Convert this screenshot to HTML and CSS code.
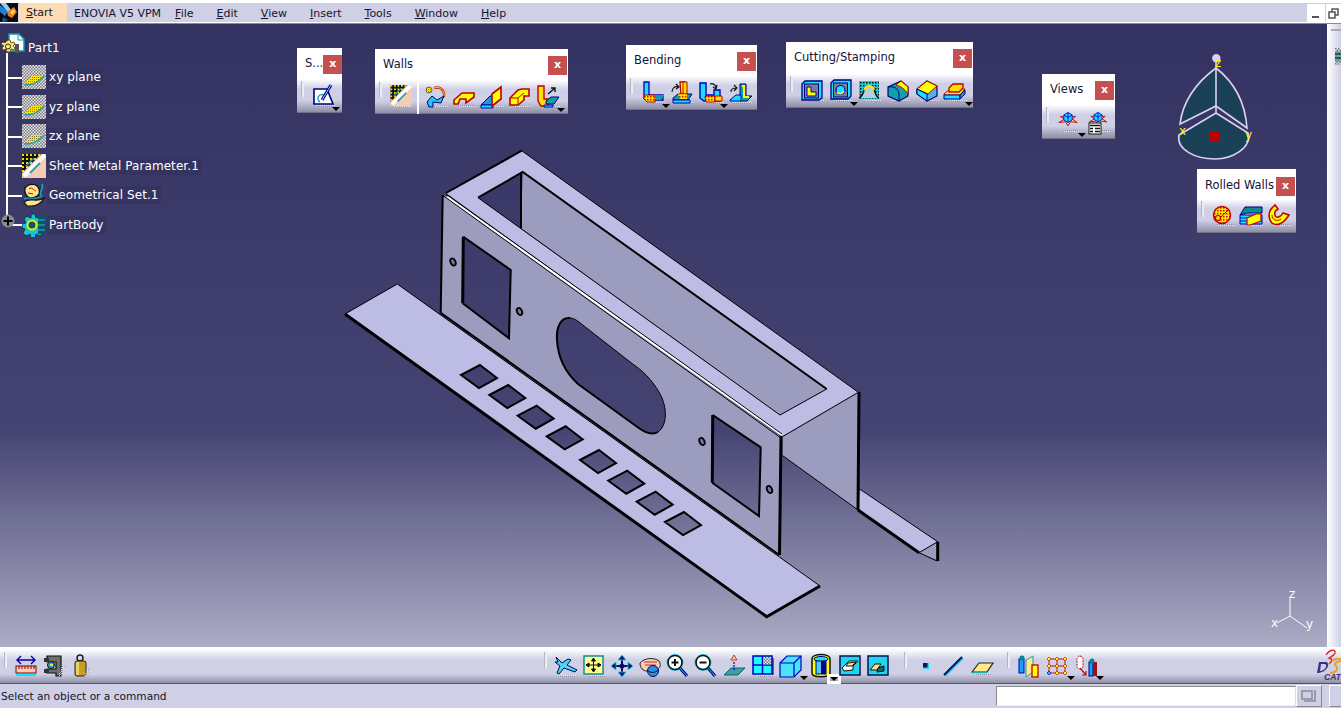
FILE: index.html
```html
<!DOCTYPE html>
<html lang="en">
<head>
<meta charset="utf-8">
<title>CATIA V5</title>
<link rel="stylesheet" href="styles.css">
</head>
<body>
<div class="app">
  <header class="menubar">
    <div class="start-logo"><svg viewBox="0 0 18 19" width="18" height="19"><rect width="18" height="19" fill="#0a0a14"/><path d="M0 2 L8 8 L5 13 L0 9Z" fill="#1f7fd0"/><path d="M0 0h6l5 7-3 2Z" fill="#8fd0f0"/><path d="M7 9 L14 4 L17 9 L12 15 L8 13Z" fill="#e8781c"/><path d="M10 9 L14 6 L15 9 L12 12Z" fill="#ffd060"/><path d="M3 14 L8 17 L5 19 H2Z" fill="#15508f"/></svg></div>
    <div class="menu-item start"><u>S</u>tart</div>
    <div class="menu-item enovia">ENOVIA V5 VPM</div>
    <div class="menu-item"><u>F</u>ile</div>
    <div class="menu-item"><u>E</u>dit</div>
    <div class="menu-item"><u>V</u>iew</div>
    <div class="menu-item"><u>I</u>nsert</div>
    <div class="menu-item"><u>T</u>ools</div>
    <div class="menu-item"><u>W</u>indow</div>
    <div class="menu-item"><u>H</u>elp</div>
    <div class="win-btn min"><svg viewBox="0 0 18 18" width="18" height="18"><rect x="5" y="12" width="7" height="2" fill="#555"/></svg></div>
    <div class="win-btn restore"><svg viewBox="0 0 14 18" width="14" height="18"><path d="M3 8h6v6H3Z M6 8V5h6v6H9" fill="none" stroke="#555" stroke-width="1.5"/></svg></div>
  </header>

  <div class="workspace">
    <main class="viewport">
      <svg class="scene" viewBox="0 24 1327 623" width="1327" height="623">
        <defs>
          <pattern id="chk" width="3" height="3" patternUnits="userSpaceOnUse"><rect width="3" height="3" fill="#e8e8ee"/><rect width="1.5" height="1.5" fill="#777"/><rect x="1.5" y="1.5" width="1.5" height="1.5" fill="#777"/></pattern>
          <pattern id="dith" width="2" height="2" patternUnits="userSpaceOnUse"><rect width="1" height="1" fill="#9a9aa8"/><rect x="1" y="1" width="1" height="1" fill="#e4e4ee"/></pattern>
          <pattern id="cdith" width="2" height="2" patternUnits="userSpaceOnUse"><rect width="2" height="2" fill="#33315c"/><rect width="1" height="1" fill="#1c4258"/><rect x="1" y="1" width="1" height="1" fill="#1c4258"/></pattern>
          <pattern id="yel" width="2" height="2" patternUnits="userSpaceOnUse"><rect width="2" height="2" fill="#ffe000"/><rect width="1" height="1" fill="#8a7a20"/></pattern>
          <pattern id="ykd" width="4" height="4" patternUnits="userSpaceOnUse"><rect width="4" height="4" fill="#111"/><rect width="2" height="2" fill="#e8e000"/></pattern>
          <pattern id="rhatch" width="3" height="3" patternUnits="userSpaceOnUse"><rect width="3" height="3" fill="#ffe000"/><path d="M0 0h1.5v1.5H0Z" fill="#d01010"/></pattern>
          <pattern id="chat" width="3" height="3" patternUnits="userSpaceOnUse"><rect width="3" height="3" fill="#20c8d8"/><rect width="1.5" height="1.5" fill="#111"/></pattern>
          <symbol id="plane" viewBox="0 0 24 24"><rect width="24" height="24" fill="url(#chk)"/><path d="M3 18 L10 11 H22 L17 17 L5 19Z" fill="url(#yel)"/><path d="M2 20 C8 20 14 20 22 11" fill="none" stroke="#1fa0b0" stroke-width="1.5"/></symbol>
          <symbol id="smp" viewBox="0 0 24 24"><rect width="24" height="24" fill="#f6cdb4"/><path d="M0 0H19L0 19Z" fill="url(#ykd)"/><path d="M23 1 L2 22" stroke="#fff" stroke-width="4"/><path d="M18 9 L8 19" stroke="#1aa3c8" stroke-width="2"/><path d="M12 4 L4 12" stroke="#1aa3c8" stroke-width="1.5"/></symbol>
          <symbol id="vw" viewBox="0 0 24 24"><path d="M1 15 L8 11 L3 8 L10 8 H14 L21 8 L17 11 L23 15 L15 14 L12 19 L9 14Z" fill="#ffe6a0" stroke="#c01010" stroke-width="1.2"/><path d="M7 6 L12 3 L17 6 V12 L12 15 L7 12Z" fill="#19d6ff" stroke="#0000c0"/><path d="M12 3V15 M7 6 L12 9 L17 6" stroke="#0000c0" fill="none"/></symbol>
        </defs>

        <!-- sheet metal part -->
        <path class="lt" fill-rule="evenodd" d="M345 314 L397.3 284 L820 586 L766.7 616.7Z M480 365l17 13-18 10-18-13Z M508.3 385l17 13-18 10-18-13Z M536.7 405.7l17 13-18 10-18-13Z M565.7 426.3l17 13-18 10-18-13Z M599 450l17 13-18 10-18-13Z M627.3 470.7l17 13-18 10-18-13Z M655.7 491.7l17 13-18 10-18-13Z M684 512l17 13-18 10-18-13Z"/>
        <path class="edge3" d="M345 314 L766.7 616.7 L820 586"/>
        <path class="edge1" d="M345 314 L397.3 284 L820 586"/>
        <path class="edge2" fill="none" d="M480 365l17 13-18 10-18-13Z M508.3 385l17 13-18 10-18-13Z M536.7 405.7l17 13-18 10-18-13Z M565.7 426.3l17 13-18 10-18-13Z M599 450l17 13-18 10-18-13Z M627.3 470.7l17 13-18 10-18-13Z M655.7 491.7l17 13-18 10-18-13Z M684 512l17 13-18 10-18-13Z"/>

        <path class="lt" d="M860 489.3 L937.7 541.7 L919 552.7 L858 510Z"/>
        <path class="md" d="M937.7 541.7 V560 L919 552.7Z"/>
        <path class="edge1" d="M860 489.3 L937.7 541.7 L919 552.7 M919 552.7 L937 561"/>
        <path class="edge3" d="M858 510 L919 552.7 M937.7 541.7 V561"/>

        <path class="md" d="M782.7 436 L858 392 V510 L782.7 455.7Z"/>
        <path class="edge1" d="M782.7 455.7 L858 510"/>
        <path class="edge3" d="M859 392 L858 510"/>
        <path class="edge2" d="M782.7 436 L858 392"/>

        <path class="md" d="M522.7 172 L826.7 389 L780 415 L521 228Z"/>
        <path class="lt" fill-rule="evenodd" d="M446 193 L521.7 150.7 L858 392 L782.7 436Z M478 197.7 L522.7 172 L826.7 389 L780 415Z"/>
        <path class="edge2" d="M446 193 L521.7 150.7"/>
        <path class="edge1" d="M521.7 150.7 L858 392"/>
        <path class="edge2" d="M478 197.7 L522.7 172 L826.7 389"/>
        <path class="edge1" d="M478 197.7 L780 415 L826.7 389"/>
        <path class="edge2" d="M521 172 V228"/>

        <path class="md" fill-rule="evenodd" d="M442.7 195 L446 196 L781 437 L779.3 555 L440.7 312.7Z M463.3 236.7 L510.7 270 L509 338.3 L462.7 303.3Z M712.7 415 L760.7 447.3 L759 516 L712.3 482.7Z M570 318 C561 317 556 327 557 340 C558 358 566 373 578 384 L636 426 C645 433 652 436 658 432 C667 426 667 410 662 398 C656 385 646 373 634 365 L584 326 C578 321 574 318 570 318Z"/>
        <path class="white2" d="M447 197 L782 435"/>
        <path class="edge1" d="M446 194 L782 434"/>
        <path class="edge1" d="M443 195.5 L781 438"/>
        <path class="edge2" d="M442.7 195 L440.7 312.7"/>
        <path class="edge2" d="M440.7 312.7 L779.3 555"/>
        <path class="edge3" d="M781 436 L779.5 555"/>
        <path class="edge3" d="M463.3 236.7 L462.7 303.3"/>
        <path class="edge2" d="M463.3 236.7 L510.7 270 L509 338.3 L462.7 303.3"/>
        <path class="edge3" d="M712.7 415 L712.3 482.7"/>
        <path class="edge2" d="M712.7 415 L760.7 447.3 L759 516 L712.3 482.7"/>
        <path class="edge2" fill="none" d="M570 318 C561 317 556 327 557 340 C558 358 566 373 578 384 L636 426 C645 433 652 436 658 432"/>
        <path class="edge1" fill="none" d="M658 432 C667 426 667 410 662 398 C656 385 646 373 634 365 L584 326 C578 321 574 318 570 318"/>
        <ellipse class="hole" cx="453" cy="262" rx="2.4" ry="3.8" transform="rotate(-25 453 262)"/>
        <ellipse class="hole" cx="519.5" cy="311.5" rx="2.4" ry="3.8" transform="rotate(-25 519.5 311.5)"/>
        <ellipse class="hole" cx="702" cy="441.5" rx="2.4" ry="3.8" transform="rotate(-25 702 441.5)"/>
        <ellipse class="hole" cx="769.5" cy="489.5" rx="2.4" ry="3.8" transform="rotate(-25 769.5 489.5)"/>

        <!-- compass -->
        <g class="compass">
          <path fill="url(#cdith)" d="M1216 68 C1197 82 1183 100 1180 124 L1216 106 L1247 128 C1245 100 1234 82 1216 68Z"/>
          <path fill="url(#cdith)" d="M1179 135 L1216 113 L1248 133 C1252 148 1232 159 1215 159 C1196 159 1176 150 1179 135Z"/>
          <line x1="1216" y1="60" x2="1216" y2="113"/>
          <circle class="cdot" cx="1216.3" cy="58.3" r="3.4"/>
        </g>
        <rect x="1210" y="132" width="9" height="9" fill="#c00000"/>
        <text class="axis-y" x="1215" y="67">z</text>
        <text class="axis-y" x="1179" y="135">x</text>
        <text class="axis-y" x="1245" y="139">y</text>

        <!-- axis system -->
        <path class="triad" d="M1290 597 V616 L1277 623 M1290 616 L1307 628"/>
        <text class="axis-w" x="1289" y="598">z</text>
        <text class="axis-w" x="1271" y="627">x</text>
        <text class="axis-w" x="1306" y="628">y</text>
      </svg>

      <nav class="tree">
        <div class="tree-row root">
          <svg class="ic-root" viewBox="0 0 26 26" width="26" height="26"><path d="M9 2H19L24 7V19H9Z" fill="#fff" stroke="#109ca8" stroke-width="1.5"/><path d="M18 2V8H24" fill="none" stroke="#109ca8"/><path d="M15 12h4v9h-4Z" fill="#555"/><path d="M8 8l2 0 1 3 3-1 1 2-2 2 2 2-1 2-3-1-1 3H7l-1-3-3 1-1-2 2-2-3-2 2-2 2 1Z" fill="#ffe97a" stroke="#665a10"/><circle cx="8" cy="14.500" r="2.500" fill="none" stroke="#222"/></svg>
          <span class="label plain">Part1</span>
        </div>
        <div class="tree-row"><svg class="ic" viewBox="0 0 24 24"><use href="#plane"/></svg><span class="label">xy plane</span></div>
        <div class="tree-row"><svg class="ic" viewBox="0 0 24 24"><use href="#plane"/></svg><span class="label">yz plane</span></div>
        <div class="tree-row"><svg class="ic" viewBox="0 0 24 24"><use href="#plane"/></svg><span class="label">zx plane</span></div>
        <div class="tree-row"><svg class="ic" viewBox="0 0 24 24"><use href="#smp"/></svg><span class="label">Sheet Metal Parameter.1</span></div>
        <div class="tree-row"><svg class="ic" viewBox="0 0 24 24"><path d="M3 5 C7 0 15 0 17 6 C19 12 14 15 8 15 C4 14 2 9 3 5Z" fill="#ffe68a" stroke="#111" stroke-width="1.4"/><path d="M7 6 C10 3 12 8 14 8 M6 10l5 1" fill="none" stroke="#c01010"/><path d="M20 1 C23 6 16 8 19 13" fill="none" stroke="#1aa3c8" stroke-width="1.5"/><path d="M2 19 C8 14 14 20 22 15 C20 20 14 24 5 23Z" fill="#ffe68a" stroke="#111" stroke-width="1.2"/><path d="M2 16 C8 13 14 18 21 13" fill="none" stroke="#1090c0" stroke-width="1.5"/></svg><span class="label">Geometrical Set.1</span></div>
        <div class="tree-row"><svg class="ic" viewBox="0 0 24 24"><path d="M9 1h4l1 4 4-2 3 3-2 4 4 1v4l-4 1 2 4-3 3-4-2-1 4H9l-1-4-4 2-3-3 2-4-3-1v-4l4-1-2-4 3-3 4 2Z" fill="#15c4d8" stroke="#083c50"/><path d="M16 3h7v18h-7Z" fill="#0c5468"/><path d="M16 7h7M16 12h7M16 17h7" stroke="#15c4d8"/><circle cx="10" cy="12" r="4.500" fill="#0c5468" stroke="#e8f000" stroke-width="2"/></svg><span class="label">PartBody</span></div>
        <div class="plus"><svg viewBox="0 0 14 14" width="14" height="14"><circle cx="7" cy="7" r="6.5" fill="#8a8a8a"/><path d="M2.5 7h9M7 2.5v9" stroke="#000" stroke-width="2"/></svg></div>
      </nav>

      <section class="tb tb-s">
        <div class="tb-head"><span class="tb-title">S...</span><span class="close">x</span></div>
        <div class="tb-body"><i class="grip"></i>
          <span class="slot"><svg class="ic" viewBox="0 0 24 24"><path class="sh" d="M4 21h20v2H6Z"/><path d="M3 5H16L22 20H3Z" fill="#fff" stroke="#000080" stroke-width="1.6"/><path d="M13 11a4 4 0 1 0 -4 7" fill="none" stroke="#1aa3a8" stroke-width="1.5"/><path d="M20 1 L11 16" stroke="#000080" stroke-width="3"/><path d="M20 1 L11 16" stroke="#7fdcff" stroke-width="1"/></svg><b class="drop"></b></span>
        </div>
      </section>

      <section class="tb tb-walls">
        <div class="tb-head"><span class="tb-title">Walls</span><span class="close">x</span></div>
        <div class="tb-body"><i class="grip"></i>
          <span class="slot"><svg class="ic" viewBox="0 0 24 24"><path class="sh" d="M4 21h18v2H6Z"/><use href="#smp" width="22" height="21" x="1" y="0"/></svg></span>
          <i class="sep"></i>
          <span class="slot"><svg class="ic" viewBox="0 0 24 24"><path class="sh" d="M6 21h18v2H8Z"/><circle cx="5" cy="5" r="3" fill="url(#yel)" stroke="#666"/><path d="M10 3 C16 1 21 5 20 12" fill="none" stroke="#d01010" stroke-width="2.4"/><path d="M10 3 C16 1 21 5 20 12" fill="none" stroke="#ffe000"/><path d="M3 17 L8 11 L13 15 L20 11 L17 18 L9 17 L9 22 L5 22Z" fill="#20c8ee" stroke="#000080"/></svg></span>
          <span class="slot"><svg class="ic" viewBox="0 0 24 24"><path class="sh" d="M5 20h19v2H7Z"/><path d="M2 15 L10 8 H22 V12 L14 18 V14 H8 L6 19 H2Z" fill="#ffff00" stroke="#c00000" stroke-width="1.6"/></svg></span>
          <span class="slot"><svg class="ic" viewBox="0 0 24 24"><path class="sh" d="M5 21h19v2H7Z"/><path d="M1 20 L10 11 H14 V20Z" fill="#2a90e0" stroke="#000080"/><path d="M1 20H13V23H1Z" fill="#19e0ff" stroke="#0000c0"/><path d="M12 9 L21 2 V14 L12 21Z" fill="#ffff00" stroke="#c00000" stroke-width="1.6"/></svg></span>
          <span class="slot"><svg class="ic" viewBox="0 0 24 24"><path class="sh" d="M5 21h19v2H7Z"/><path d="M2 13 L10 5 L14 4 H21 L21 11 H16 V15 L10 20 H2Z" fill="#ffff00" stroke="#c00000" stroke-width="1.6"/><path d="M2 13H10V20 M10 13 L16 8" fill="none" stroke="#c00000"/></svg></span>
          <span class="slot"><svg class="ic" viewBox="0 0 24 24"><path class="sh" d="M6 21h18v2H8Z"/><path d="M2 1H8V14 H12 V21 H5 L2 16Z" fill="#ffe000" stroke="#c00000" stroke-width="1.4"/><path d="M10 16 L15 12 H23 L18 19 H10Z" fill="#0fa0a0" stroke="#000080"/><path d="M8 20H17V22H8Z" fill="#19e0ff" stroke="#0000c0"/><path d="M12 9 L19 3 M15 3h4v4" fill="none" stroke="#111" stroke-width="1.4"/></svg><b class="drop"></b></span>
        </div>
      </section>

      <section class="tb tb-bend">
        <div class="tb-head"><span class="tb-title">Bending</span><span class="close">x</span></div>
        <div class="tb-body"><i class="grip"></i>
          <span class="slot"><svg class="ic" viewBox="0 0 24 24"><path class="sh" d="M5 21h19v2H7Z"/><path d="M3 1H8V14H22 V19H9 L3 17Z" fill="#19e0ff" stroke="#0000c0" stroke-width="1.3"/><path d="M3 14H14V21H6 L3 18Z" fill="url(#rhatch)" stroke="#c00000"/><path d="M14 14H23L20 19H14Z" fill="#0fa0a0"/></svg><b class="drop"></b></span>
          <span class="slot"><svg class="ic" viewBox="0 0 24 24"><path class="sh" d="M5 21h19v2H7Z"/><path d="M10 1H15V14H11Z" fill="#ffff00" stroke="#c00000" stroke-width="1.3"/><path d="M13 1H17V15H13Z" fill="#ffe000" stroke="#c00000"/><path d="M3 17 L8 13 H22 L18 19 H3Z" fill="#0fa0a0" stroke="#000080"/><path d="M3 19H20V22H3Z" fill="#19e0ff" stroke="#0000c0"/><path d="M8 13 H17 V18 H10Z" fill="url(#rhatch)"/><path d="M2 11 C2 7 5 5 8 6 M6 3l3 3-3 2" fill="none" stroke="#111" stroke-width="1.2"/></svg></span>
          <span class="slot"><svg class="ic" viewBox="0 0 24 24"><path class="sh" d="M5 21h19v2H7Z"/><path d="M1 2H7V14H15V9H21V20H5 L1 17Z" fill="#19e0ff" stroke="#0000c0" stroke-width="1.4"/><path d="M6 15H16V21H7Z" fill="url(#rhatch)" stroke="#c00000"/><path d="M16 15H23V20H16Z" fill="#ffe000" stroke="#c00000"/><path d="M11 3 C14 2 17 4 17 7 M14 6l3 2 1-4" fill="none" stroke="#111" stroke-width="1.2"/></svg><b class="drop"></b></span>
          <span class="slot"><svg class="ic" viewBox="0 0 24 24"><path class="sh" d="M5 21h19v2H7Z"/><path d="M12 3H18V15H24 L19 20H12Z" fill="#0fa0a0" stroke="#000080"/><path d="M14 5H16V16H21" fill="none" stroke="#ffff00" stroke-width="2"/><path d="M2 19 L8 14 H13 V20H2Z" fill="#19e0ff" stroke="#0000c0"/><path d="M3 11 C3 8 5 7 8 7 M6 4l3 3-3 3" fill="none" stroke="#111" stroke-width="1.2"/></svg></span>
        </div>
      </section>

      <section class="tb tb-cut">
        <div class="tb-head"><span class="tb-title">Cutting/Stamping</span><span class="close">x</span></div>
        <div class="tb-body"><i class="grip"></i>
          <span class="slot"><svg class="ic" viewBox="0 0 24 24"><path class="sh" d="M5 21h19v2H7Z"/><path d="M2 5 L5 2 H22 V19 L19 21 H2Z" fill="#19e0ff" stroke="#000080" stroke-width="1.3"/><rect x="4.500" y="5" width="14" height="14" fill="#7a7f92" stroke="#000080"/><path d="M7 8H11V13H16V17H7Z" fill="#ffff00" stroke="#0000c0"/></svg></span>
          <span class="slot"><svg class="ic" viewBox="0 0 24 24"><path class="sh" d="M5 21h19v2H7Z"/><path d="M2 4 L5 1 H22 V17 L19 20 H2Z" fill="#19e0ff" stroke="#000080" stroke-width="1.3"/><rect x="4.500" y="4" width="14" height="14" fill="#7a7f92" stroke="#000080"/><circle cx="11.500" cy="11" r="4.500" fill="#19e0ff" stroke="#0000c0" stroke-width="1.200"/><path d="M8 13 C10 16 14 15 15 12" fill="none" stroke="#ffff00" stroke-width="1.500"/></svg><b class="drop"></b></span>
          <span class="slot"><svg class="ic" viewBox="0 0 24 24"><path class="sh" d="M8 21h16v2H10Z"/><rect x="2" y="2" width="20" height="18" fill="url(#chat)"/><path d="M2 19 C6 18 6 13 8 9 C11 5 15 7 17 10 C18 14 19 18 22 19" fill="#bcd" stroke="#111" stroke-width="1.4"/><path d="M7 11 C10 5 15 6 17 11" fill="none" stroke="#ffe000" stroke-width="2.200"/></svg></span>
          <span class="slot"><svg class="ic" viewBox="0 0 24 24"><path class="sh" d="M5 21h19v2H7Z"/><path d="M2 8 L15 2 L22 8 V17 L13 22 L2 17Z" fill="#0fa0a8" stroke="#000080" stroke-width="1.200"/><path d="M10 6 L15 2 L22 8 L22 15 C19 10 14 7 10 6Z" fill="#ffff00" stroke="#c00000"/><path d="M2 8 C8 7 12 9 13 15 V22" fill="none" stroke="#000080"/></svg></span>
          <span class="slot"><svg class="ic" viewBox="0 0 24 24"><path class="sh" d="M5 21h19v2H7Z"/><path d="M2 10 L12 2 L22 7 V17 L12 22 L2 15Z" fill="#50b0e8" stroke="#000080" stroke-width="1.200"/><path d="M2 10 L12 2 L22 7 L13 15Z" fill="#ffff00" stroke="#c00000"/><path d="M2 10 L2 15 L12 22 V15Z" fill="#19e0ff" stroke="#000080"/></svg></span>
          <span class="slot"><svg class="ic" viewBox="0 0 24 24"><path class="sh" d="M5 21h19v2H7Z"/><path d="M1 15 L7 10 H22 L17 16 H1Z" fill="#ffff00" stroke="#c00000"/><path d="M6 9 L10 5 H20 V9 L16 13 H6Z" fill="#ffe000" stroke="#c00000" stroke-width="1.300"/><path d="M1 16H17V20H1Z" fill="#19e0ff" stroke="#0000c0"/><path d="M17 16 L22 11 V15 L17 20Z" fill="#0fa0a8" stroke="#000080"/></svg><b class="drop"></b></span>
        </div>
      </section>

      <section class="tb tb-views">
        <div class="tb-head"><span class="tb-title">Views</span><span class="close">x</span></div>
        <div class="tb-body"><i class="grip"></i>
          <span class="slot"><svg class="ic" viewBox="0 0 24 24"><path class="sh" d="M5 20h17v2H7Z"/><use href="#vw" width="22" height="20"/></svg><b class="drop"></b></span>
          <span class="slot"><svg class="ic" viewBox="0 0 24 24"><path class="sh" d="M12 20h12v2H14Z"/><use href="#vw" x="1" width="22" height="19"/><rect x="3" y="13" width="12" height="11" fill="#fff" stroke="#111"/><path d="M4 15.500h10M4 18.500h3M9 18.500h5M4 21.500h3M9 21.500h5" stroke="#111" stroke-width="1.500"/></svg></span>
        </div>
      </section>

      <section class="tb tb-rolled">
        <div class="tb-head"><span class="tb-title">Rolled Walls</span><span class="close">x</span></div>
        <div class="tb-body"><i class="grip"></i>
          <span class="slot"><svg class="ic" viewBox="0 0 24 24"><path class="sh" d="M5 20h19v2H7Z"/><circle cx="11" cy="11" r="8.500" fill="url(#rhatch)" stroke="#c00000" stroke-width="1.500"/><circle cx="7" cy="14" r="2.500" fill="#ffe000" stroke="#c00000" stroke-width="1.200"/><path d="M9 14 L18 5" stroke="#c00000"/></svg></span>
          <span class="slot"><svg class="ic" viewBox="0 0 24 24"><path class="sh" d="M5 20h19v2H7Z"/><path d="M1 11 L6 3 H23 V9 H8 L1 11Z" fill="#0a8a92" stroke="#000080"/><path d="M1 11H23V20H1Z" fill="#19e0ff" stroke="#0000c0"/><path d="M1 14H23M1 17H23" stroke="#0000c0"/><path d="M8 14 L17 10 H22 V17 L11 21 H8Z" fill="#ffff00" stroke="#c00000" stroke-width="1.200"/></svg></span>
          <span class="slot"><svg class="ic" viewBox="0 0 24 24"><path class="sh" d="M5 20h19v2H7Z"/><path d="M6 3 C1 7 1 15 5 19 C10 23 17 19 22 11 L16 9 C14 13 9 15 8 11 C7 8 9 6 11 5 L8 1Z" fill="#ffff00" stroke="#c00000" stroke-width="1.500"/><path d="M5 11 C5 16 10 18 14 15" fill="none" stroke="#c00000"/></svg></span>
        </div>
      </section>
    </main>
    <aside class="side-strip">
      <i class="side-grip"></i>
      <svg class="side-ic" viewBox="0 0 6 17" width="6" height="17"><rect width="6" height="17" fill="url(#chk)"/><path d="M0 3h6v11H0Z" fill="#5fa8a0"/><path d="M0 6h6M0 10h6" stroke="#333" stroke-width="1.500"/></svg>
    </aside>
  </div>

  <footer class="bottombar">
    <div class="group g1"><i class="grip"></i>
      <span class="slot"><svg class="ic" viewBox="0 0 24 24"><path d="M3 6h18M7 2 L3 6 L7 10 M17 2 L21 6 L17 10" fill="none" stroke="#0000b0" stroke-width="1.400"/><rect x="2" y="12" width="20" height="7" fill="#f6cdb4" stroke="#800000"/><path d="M5 12v3M8 12v3M11 12v3M14 12v3M17 12v3M20 12v3" stroke="#800000"/><path d="M2 20h20v2H2Z" fill="#19e0ff"/></svg></span>
      <span class="slot"><svg class="ic" viewBox="0 0 24 24"><path d="M5 2H19V22H14V19H5V15H14V8H5Z" fill="#6e6e6e" stroke="#111" stroke-width="1.200"/><path d="M2 4H7V8H2ZM2 15H7V19H2Z" fill="#333"/><circle cx="9" cy="11" r="3.500" fill="#19a0e0" stroke="#111"/><path d="M8 10h3v2H8Z" fill="#ffe000"/><path class="sh" d="M20 12h3L19 22h-3Z"/></svg></span>
      <span class="slot"><svg class="ic" viewBox="0 0 24 24"><circle cx="10" cy="4" r="3" fill="none" stroke="#222" stroke-width="1.500"/><rect x="5" y="7" width="11" height="15" rx="2" fill="#c8a020" stroke="#222"/><rect x="6" y="8" width="3" height="13" fill="#ecd060"/><path class="sh" d="M17 14h4l-5 9h-2Z"/></svg></span>
    </div>
    <div class="group g2"><i class="grip"></i>
      <span class="slot"><svg class="ic" viewBox="0 0 24 24"><path class="sh" d="M4 21h18v2H6Z"/><path d="M2 3 L8 9 L14 5 L17 6 L13 11 L23 16 L21 18 L10 14 L5 20 L3 19 L6 12 L1 8 L4 8Z" fill="#50d8e8" stroke="#000070"/></svg></span>
      <span class="slot"><svg class="ic" viewBox="0 0 24 24"><path class="sh" d="M4 21h20v2H6Z"/><rect x="2" y="2" width="19" height="18" fill="#ffff90" stroke="#108c98" stroke-width="1.500"/><path d="M11.500 4v14M4 11h15M11.500 4l-2 3h4ZM11.500 18l-2-3h4ZM4 11l3-2v4ZM19 11l-3-2v4Z" stroke="#111" fill="#111"/></svg></span>
      <span class="slot"><svg class="ic" viewBox="0 0 24 24"><path d="M12 2v20M2 12h20" stroke="#101060" stroke-width="2"/><path d="M12 1l-4 5h8ZM12 23l-4-5h8ZM1 12l5-4v8ZM23 12l-5-4v8Z" fill="#101060" stroke="#19d0f0" stroke-width=".8"/><circle cx="12" cy="12" r="2.500" fill="#101060"/></svg></span>
      <span class="slot"><svg class="ic" viewBox="0 0 24 24"><path d="M2 9 C6 4 16 3 21 7 C24 12 21 15 19 15 L9 17 C5 17 2 14 2 9Z" fill="#f6cdb4" stroke="#222"/><path d="M6 8 H19 M7 11H18" stroke="#c03030"/><circle cx="15" cy="17" r="5.500" fill="#2a90e0" stroke="#000080"/><path d="M10 17 C12 19 18 19 20 16" fill="none" stroke="#111"/></svg></span>
      <span class="slot"><svg class="ic" viewBox="0 0 24 24"><circle cx="9" cy="8.500" r="8" fill="none" stroke="#19c8e0"/><circle cx="9" cy="8.500" r="7" fill="#fff" stroke="#111" stroke-width="1.600"/><path d="M5.500 8.500h7M9 5v7" stroke="#111" stroke-width="2"/><path d="M14 14 L21 22" stroke="#000080" stroke-width="3"/><path d="M14 14 L21 22" stroke="#19d0f0"/></svg></span>
      <span class="slot"><svg class="ic" viewBox="0 0 24 24"><circle cx="9" cy="8.500" r="8" fill="none" stroke="#19c8e0"/><circle cx="9" cy="8.500" r="7" fill="#fff" stroke="#111" stroke-width="1.600"/><path d="M5.500 8.500h7" stroke="#111" stroke-width="2"/><path d="M14 14 L21 22" stroke="#000080" stroke-width="3"/><path d="M14 14 L21 22" stroke="#19d0f0"/></svg></span>
      <span class="slot"><svg class="ic" viewBox="0 0 24 24"><path d="M2 21 L9 14 H23 L16 21Z" fill="#3aa0a8" stroke="#106070"/><path d="M12 16V4" stroke="#0000c0" stroke-width="1.200" stroke-dasharray="2 1"/><path d="M12 1l-3 5h6Z" fill="none" stroke="#d03030"/><path d="M12 3v5" stroke="#ffe000"/></svg></span>
      <span class="slot"><svg class="ic" viewBox="0 0 24 24"><path class="sh" d="M6 21h18v2H8Z"/><rect x="22" y="4" width="2" height="17" fill="#666"/><rect x="3" y="2" width="19" height="18" fill="#19ffff" stroke="#0000c0" stroke-width="1.500"/><path d="M12.500 2v18M3 11h19" stroke="#0000c0" stroke-width="1.500"/><rect x="13" y="3" width="8" height="7.500" fill="url(#chk)"/></svg></span>
      <span class="slot"><svg class="ic" viewBox="0 0 24 24"><path d="M2 9 L9 2 H23 V16 L16 23 H2Z" fill="#4ae4ff" stroke="#0000c0" stroke-width="1.200"/><path d="M2 9H16V23M16 9L23 2" fill="none" stroke="#0000c0" stroke-width="1.200"/></svg><b class="drop low"></b></span>
      <span class="slot cyl"><svg class="ic" viewBox="0 0 24 24"><path d="M3 5 C3 -1 21 -1 21 5 V19 C21 24 3 24 3 19Z" fill="#ffff00" stroke="#111" stroke-width="1.500"/><ellipse cx="12" cy="5" rx="7" ry="2.500" fill="#19e0ff" stroke="#000080"/><rect x="7" y="7" width="10" height="13" fill="#4ad0f0" stroke="#000080"/><rect x="12" y="7" width="5" height="13" fill="#0000a0"/></svg><b class="drop boxed"></b></span>
      <span class="slot nudge"><svg class="ic" viewBox="0 0 24 24"><rect x="2" y="2" width="20" height="19" fill="#19d8f0" stroke="#101050" stroke-width="1.500"/><path d="M4 14 L11 7 H20 L15 12 V16 L6 17Z" fill="#fff" stroke="#111"/><path d="M10 9 L18 8 L14 12 L8 12Z" fill="#ffe68a" stroke="#111"/></svg></span>
      <span class="slot"><svg class="ic" viewBox="0 0 24 24"><rect x="2" y="2" width="20" height="19" fill="#19d8f0" stroke="#101050" stroke-width="1.500"/><path d="M4 16 L9 10 H15 L11 16Z" fill="#ffe68a" stroke="#111"/><path d="M12 14 L18 12 V17 L11 18Z" fill="#106878" stroke="#111"/></svg></span>
    </div>
    <div class="group g3"><i class="grip"></i>
      <span class="slot"><svg class="ic" viewBox="0 0 24 24"><rect x="9" y="9" width="6" height="6" fill="#19e0ff"/><rect x="9" y="9" width="4.500" height="4.500" fill="#101060"/></svg></span>
      <span class="slot"><svg class="ic" viewBox="0 0 24 24"><path d="M3 22 L21 4" stroke="#19d0f0" stroke-width="2"/><path d="M2 21 L20 3" stroke="#101060" stroke-width="2"/></svg></span>
      <span class="slot"><svg class="ic" viewBox="0 0 24 24"><path class="sh" d="M3 19h18v2H5Z"/><path d="M2 18 L9 9 H23 L17 18Z" fill="#ffe98a" stroke="#222" stroke-width="1.200"/><path d="M2 18.500H17" stroke="#19b0c0" stroke-width="1.500"/></svg></span>
    </div>
    <div class="group g4"><i class="grip"></i>
      <span class="slot"><svg class="ic" viewBox="0 0 24 24"><path d="M9 6 L16 2 V18 L9 23Z" fill="#ffe98a" stroke="#19a0a8"/><rect x="2" y="5" width="5" height="14" fill="#19a0ff" stroke="#0000a0"/><circle cx="5" cy="4" r="2.500" fill="#0f8090"/><rect x="15" y="11" width="6" height="12" fill="#ffff00" stroke="#c00000" stroke-width="1.300"/></svg></span>
      <span class="slot"><svg class="ic" viewBox="0 0 24 24"><path d="M4 5h16M4 12h16M4 19h16M4 5v14M12 5v14M20 5v14" stroke="#c01010"/><path d="M4 3l2 2-2 2-2-2ZM12 3l2 2-2 2-2-2ZM20 3l2 2-2 2-2-2ZM4 10l2 2-2 2-2-2ZM12 10l2 2-2 2-2-2ZM20 10l2 2-2 2-2-2ZM12 17l2 2-2 2-2-2ZM20 17l2 2-2 2-2-2Z" fill="#ffff00" stroke="#c01010" stroke-width=".7"/><path d="M4 17l2 2-2 2-2-2Z" fill="#19c0ff" stroke="#0000c0" stroke-width=".7"/></svg><b class="drop low"></b></span>
      <span class="slot nudge"><svg class="ic" viewBox="0 0 24 24"><rect x="3" y="2" width="6" height="13" rx="3" fill="#fff" stroke="#b01010" stroke-dasharray="2 1"/><path d="M6 14 L12 21 M8 21h4v-4" fill="none" stroke="#b01010" stroke-width="1.200"/><rect x="15" y="8" width="4" height="14" fill="#19a0ff" stroke="#000080"/><rect x="19" y="8" width="4" height="14" fill="#a01010"/><circle cx="18" cy="7" r="2.500" fill="#0f8090"/></svg><b class="drop low"></b></span>
    </div>
    <div class="ds-logo"><svg viewBox="0 0 25 32" width="25" height="32"><path d="M10 6 C14 0 20 0 19 4 C18 7 14 8 13 9 C16 9 17 12 13 15" fill="none" stroke="#d82020" stroke-width="1.300"/><path d="M16 12 C22 8 26 10 24 12 C19 13 18 15 20 17 C23 21 19 24 14 24" fill="none" stroke="#f0a020" stroke-width="2"/><path d="M3 13 H10 C15 14 11 24 1 24 Z M5 15 L4 22 C9 22 12 16 9 15Z" fill="#343480" fill-rule="evenodd"/><text class="cat" x="8" y="31">CAT</text></svg></div>
  </footer>

  <div class="statusbar">
    <span class="status-text">Select an object or a command</span>
    <input class="cmd" type="text" aria-label="Command">
    <button class="sb-btn" aria-label="Power input"><svg viewBox="0 0 20 16" width="20" height="16"><path d="M3 3h10v8H3Z M16 2v11H5" fill="none" stroke="#8a8a96" stroke-width="1.500"/></svg></button>
    <button class="sb-btn last" aria-label="Options"></button>
  </div>
</div>
</body>
</html>
```

FILE: styles.css
```css
* { box-sizing: border-box; }
html, body { margin: 0; height: 100%; overflow: hidden; }
body { font-family: "DejaVu Sans", sans-serif; font-size: 11px; color: #14142a; background: #cfd0e6; }
.app { width: 1341px; height: 708px; display: flex; flex-direction: column; overflow: hidden; }

/* menu */
.menubar { height: 24px; flex: none; display: flex; align-items: center; background: #cfd0e6; border-top: 3px solid #fff; border-bottom: 1px solid #8a8a96; box-shadow: inset 0 -1px 0 #fff; }
.start-logo { width: 19px; height: 19px; flex: none; display: flex; align-self: flex-start; }
.menu-item { padding: 0 11.5px; line-height: 19px; white-space: nowrap; }
.menu-item.start { background: #fddcb3; padding: 0 0 0 7px; width: 48px; height: 19px; align-self: flex-start; }
.menu-item.enovia { padding: 0 2.5px 0 7px; }
.win-btn { height: 18px; background: #fff; flex: none; display: flex; }
.win-btn.min { width: 18px; margin-left: auto; }
.win-btn.restore { width: 15px; margin-left: 1px; }

/* workspace */
.workspace { flex: 1; display: flex; min-height: 0; }
.viewport { position: relative; width: 1327px; flex: none; overflow: hidden; background: linear-gradient(#343260 0%, #454372 65%, #acacc6 100%); }
.side-strip { flex: 1; background: linear-gradient(90deg, #fff, #cfd0e6); display: flex; flex-direction: column; align-items: flex-end; }
.side-grip { width: 10px; height: 2px; margin: 5px 0 17px; background: #aaa; }
.side-ic { display: block; }
.scene { position: absolute; left: 0; top: 0; display: block; }

.lt { fill: #bcbce4; }
.md { fill: #9c9cbf; }
.edge1, .edge2, .edge3, .white2 { fill: none; stroke: #000; }
.edge1 { stroke-width: 1; }
.edge2 { stroke-width: 2; }
.edge3 { stroke-width: 3; }
.white2 { stroke: #fff; stroke-width: 2.5; }
.hole { fill: #777799; stroke: #000; stroke-width: 1.8; }

.compass line, .compass path, .compass circle { stroke: #dccff4; stroke-width: 1.6; }
.cdot { fill: #dccff4; }
.axis-y { font-size: 12px; fill: #ffee22; font-family: "DejaVu Sans", sans-serif; }
.axis-w { font-size: 12px; fill: #fff; font-family: "DejaVu Sans", sans-serif; }
.triad { fill: none; stroke: #fff; stroke-width: 1; }

/* tree */
.tree { position: absolute; left: 0; top: 9px; color: #fff; font-size: 12px; letter-spacing: .07px; }
.tree::before { content: ""; position: absolute; left: 6px; top: 20px; width: 2px; height: 166px; background: #fff; }
.tree-row { position: relative; height: 29.5px; display: flex; align-items: center; padding-left: 22px; }
.tree-row:not(.root)::before { content: ""; position: absolute; left: 7px; top: 14px; width: 15px; height: 2px; background: #fff; }
.tree-row.root { padding-left: 0; }
.tree-row .ic { width: 24px; height: 24px; flex: none; }
.ic-root { flex: none; margin-top: -6px; }
.label { margin-left: 1px; padding: 2px 2px; white-space: nowrap; background: rgba(48, 46, 90, .5); border-radius: 2px; }
.label.plain { margin-left: 0; background: none; }
.plus { position: absolute; left: 1px; top: 181px; width: 14px; height: 14px; }

/* floating toolbars */
.tb { position: absolute; display: flex; flex-direction: column; background: #fff; height: 65px; --slot: 28px; }
.tb-s { left: 297px; top: 24px; width: 45px; }
.tb-walls { left: 375px; top: 25px; width: 193px; }
.tb-bend { left: 626px; top: 21px; width: 131px; --slot: 29px; }
.tb-cut { left: 786px; top: 18px; width: 187px; height: 66px; --slot: 28.6px; }
.tb-views { left: 1042px; top: 50px; width: 73px; --slot: 29px; }
.tb-rolled { left: 1197px; top: 145px; width: 99px; height: 64px; }
.tb-head { flex: 1; display: flex; align-items: flex-start; justify-content: space-between; padding: 7px 1px 0 8px; background: #fff; }
.tb-rolled .tb-head { padding-top: 8px; }
.tb-title { font-size: 11.5px; line-height: 15px; margin-top: 1px; color: #14143a; white-space: nowrap; }
.close { width: 19px; height: 19px; background: #c65050; color: #fff; font-weight: 700; font-size: 11px; line-height: 18px; text-align: center; flex: none; }
.tb-body { height: 34px; flex: none; display: flex; align-items: center; padding-left: 4px; background: linear-gradient(#fff 0%, #cfd0e6 28%, #cfd0e6 62%, #8e8ea4 97%, #55556a 100%); }
.grip { width: 3px; height: 16px; flex: none; background: #ececf4; border-left: 1px solid #b4b4c0; margin-right: 5px; align-self: flex-start; margin-top: 2px; }
.sep { width: 2px; height: 34px; background: #fff; flex: none; margin: 0 3px 0 2px; }
.slot { position: relative; width: var(--slot, 28px); height: 26px; flex: none; display: flex; align-items: center; justify-content: center; }
.slot .ic { width: 24px; height: 24px; display: block; overflow: visible; }
.sh { fill: url(#dith); stroke: none; }
.drop { position: absolute; right: -3px; bottom: -2px; width: 0; height: 0; border: 4px solid transparent; border-bottom: 0; border-top: 4px solid #000; }
.drop.low { bottom: -1px; right: -4px; }
.drop.boxed { bottom: -2px; right: -3px; box-shadow: 0 0 0 3px #fff; }

/* bottom bar */
.bottombar { height: 37px; flex: none; display: flex; align-items: flex-start; border-bottom: 1px solid #55556a; background: linear-gradient(#fff 0%, #fff 6%, #cfd0e6 36%, #cfd0e6 75%, #8e8ea4 100%); }
.group { display: flex; align-items: flex-start; height: 36px; }
.group .grip { margin-top: 5px; }
.group .slot { margin-top: 6px; }
.g1 { margin-left: 4px; }
.g2 { margin-left: 448px; }
.g3 { margin-left: 12px; }
.g4 { margin-left: 11px; }
.slot.cyl { margin-left: 3px; }
.slot.nudge { margin-left: 1px; }
.ds-logo { margin-left: auto; width: 25px; height: 36px; overflow: hidden; padding-top: 2px; }
.cat { font: italic 700 8.5px "Liberation Sans", sans-serif; fill: #343480; }

/* status */
.statusbar { height: 24px; flex: none; display: flex; align-items: center; background: #cfd0e6; padding-left: 1px; font-size: 10.6px; }
.status-text { white-space: nowrap; width: 995px; flex: none; color: #14142a; }
.cmd { width: 300px; height: 20px; flex: none; background: #fff; border: 1px solid #8a8a8a; border-right-color: #ddd; border-bottom-color: #eee; padding: 0; }
.sb-btn { width: 26px; height: 22px; flex: none; padding: 2px 0 0; background: #cfd0e6; border: 1px solid #fff; border-right-color: #888; border-bottom-color: #888; }
.sb-btn.last { margin-left: 7px; width: 20px; }
```
